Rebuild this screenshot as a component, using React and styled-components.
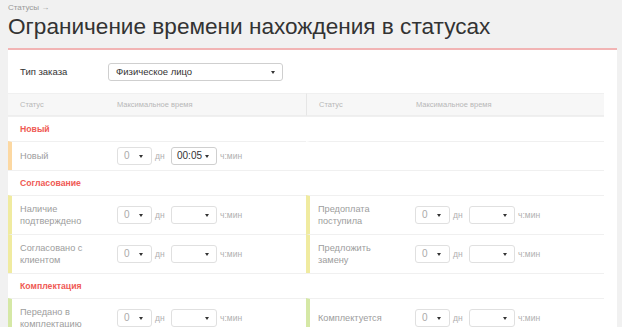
import React from "react";
import styled, { createGlobalStyle } from "styled-components";

const GlobalStyle = createGlobalStyle`
  body {
    margin: 0;
    background: #f1f1f1;
    font-family: "Liberation Sans", Arial, sans-serif;
    color: #333;
  }
`;

const Page = styled.div`
  padding: 3px 5px 0 8px;
`;

const Crumbs = styled.div`
  font-size: 8px;
  line-height: 10px;
  color: #9a9a9a;
`;

const Title = styled.h1`
  margin: 0 0 7px;
  font-size: 22.6px;
  line-height: 28px;
  font-weight: normal;
  color: #333;
`;

const Panel = styled.div`
  width: 596px;
  padding-right: 13px;
  background: #fff;
  border-top: 2px solid #f2b4b4;
`;

const FilterRow = styled.div`
  display: flex;
  align-items: center;
  height: 43px;
  padding-left: 12px;
  font-size: 9.5px;
`;

const FilterLabel = styled.div`
  width: 88px;
`;

const Select = styled.div`
  position: relative;
  flex: none;
  box-sizing: border-box;
  width: ${(p) => p.$w}px;
  height: 18px;
  padding-left: ${(p) => p.$pad || 5}px;
  border: 1px solid ${(p) => (p.$dark ? "#cfcfcf" : "#e0e0e0")};
  border-radius: 3px;
  background: #fff;
  font-size: ${(p) => p.$fs || 10}px;
  line-height: 16px;
  color: ${(p) => (p.$muted ? "#aaa" : "#333")};
  &::after {
    content: "";
    position: absolute;
    right: ${(p) => p.$caret || 7}px;
    top: 7px;
    border-left: 2.5px solid transparent;
    border-right: 2.5px solid transparent;
    border-top: 3px solid #333;
  }
`;

const Grid = styled.div`
  display: grid;
  grid-template-columns: 298px 298px;
`;

const HeadCell = styled.div`
  display: flex;
  align-items: center;
  height: 21px;
  padding-left: 12px;
  background: #f7f7f7;
  border-top: 1px solid #f0f0f0;
  border-bottom: 1px solid #eee;
  border-left: ${(p) => (p.$divide ? "1px solid #e6e6e6" : "none")};
  font-size: 7.5px;
  color: #b8b8b8;
  & > span:first-child {
    width: 97px;
  }
`;

const Section = styled.div`
  grid-column: 1 / -1;
  display: flex;
  align-items: center;
  height: 24px;
  padding-left: 12px;
  border-top: 1px solid #f0f0f0;
  font-size: 8.7px;
  font-weight: bold;
  color: #ef5a55;
`;

const Cell = styled.div`
  display: flex;
  align-items: center;
  box-sizing: border-box;
  min-height: 29px;
  padding-left: 8px;
  border-top: 1px solid #f0f0f0;
  border-left: 4px solid ${(p) => p.$bar || "transparent"};
`;

const Label = styled.div`
  box-sizing: border-box;
  width: 97px;
  padding: 7px 14px 7px 0;
  font-size: 9.2px;
  line-height: 12px;
  color: #9d9d9d;
`;

const Time = styled.div`
  display: flex;
  align-items: center;
`;

const Unit = styled.span`
  width: ${(p) => p.$w}px;
  margin: 0 ${(p) => p.$mr || 0}px 0 3px;
  font-size: 8.5px;
  color: #b0b0b0;
`;

const groups = [
  {
    name: "Новый",
    bar: "#fcd8a2",
    rows: [[{ label: "Новый", time: "00:05" }, null]],
  },
  {
    name: "Согласование",
    bar: "#f0eba0",
    rows: [
      [{ label: "Наличие подтверждено" }, { label: "Предоплата поступила" }],
      [{ label: "Согласовано с клиентом" }, { label: "Предложить замену" }],
    ],
  },
  {
    name: "Комплектация",
    bar: "#d5e8a6",
    rows: [
      [{ label: "Передано в комплектацию" }, { label: "Комплектуется" }],
      [{ label: "Укомплектован" }, null],
    ],
  },
];

const StatusCell = ({ item, bar }) => {
  if (!item) return <Cell />;
  return (
    <Cell $bar={bar}>
      <Label>{item.label}</Label>
      <Time>
        <Select $w={35} $muted $pad={6} $caret={8}>0</Select>
        <Unit $w={13} $mr={3}>дн</Unit>
        <Select $w={46} $dark={!!item.time}>{item.time || ""}</Select>
        <Unit $w={30}>ч:мин</Unit>
      </Time>
    </Cell>
  );
};

export default function App() {
  return (
    <>
      <GlobalStyle />
      <Page>
        <Crumbs>Статусы →</Crumbs>
        <Title>Ограничение времени нахождения в статусах</Title>
        <Panel>
          <FilterRow>
            <FilterLabel>Тип заказа</FilterLabel>
            <Select $w={175} $dark $fs={9.5} $pad={7}>
              Физическое лицо
            </Select>
          </FilterRow>
          <Grid>
            <HeadCell>
              <span>Статус</span>
              <span>Максимальное время</span>
            </HeadCell>
            <HeadCell $divide>
              <span>Статус</span>
              <span>Максимальное время</span>
            </HeadCell>
            {groups.map((g) => (
              <React.Fragment key={g.name}>
                <Section>{g.name}</Section>
                {g.rows.map((pair, i) => (
                  <React.Fragment key={i}>
                    <StatusCell item={pair[0]} bar={g.bar} />
                    <StatusCell item={pair[1]} bar={g.bar} />
                  </React.Fragment>
                ))}
              </React.Fragment>
            ))}
          </Grid>
        </Panel>
      </Page>
    </>
  );
}
